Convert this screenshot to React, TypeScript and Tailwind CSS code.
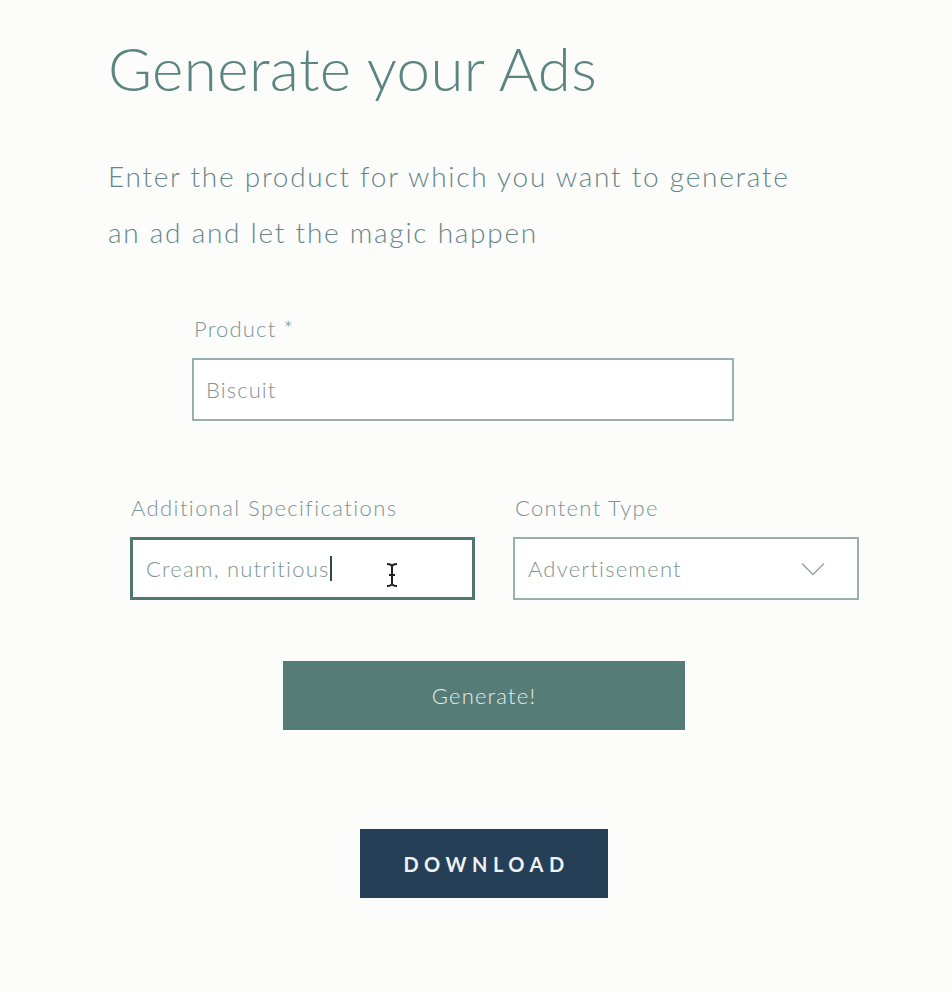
const font = { fontFamily: 'Lato, "Open Sans", sans-serif' }

export default function App() {
  return (
    <div className="min-h-[992px] w-[952px] bg-[#fcfcfb] text-[#5b817c]" style={font}>
      <div className="pl-[108px] pt-[24px]">
        <h1 className="text-[60px] font-light leading-[88px] tracking-[0.4px] text-[#5a8580]">Generate your Ads</h1>
        <p className="mt-[36px] w-[700px] text-[28px] font-light leading-[56px] tracking-[1.75px] text-[#66878a]">
          Enter the product for which you want to generate an ad and let the magic happen
        </p>
      </div>

      <div className="mt-[52px] pl-[192px]">
        <label className="block pl-[2px] text-[22px] font-light tracking-[1.2px] text-[#7a9592]">Product *</label>
        <div className="mt-[13px] flex h-[63px] w-[542px] items-center border-2 border-[#98b0ad] bg-white px-[12px] text-[22px] font-light tracking-[1.1px] text-[#7d9693]">
          Biscuit
        </div>
      </div>

      <div className="mt-[70px] flex gap-[38px] pl-[130px]">
        <div>
          <label className="block pl-[1px] text-[22px] font-light tracking-[1.4px] text-[#7a9592]">Additional Specifications</label>
          <div className="relative mt-[13px] flex h-[63px] w-[345px] items-center border-[3px] border-[#4f7871] bg-white px-[13px] text-[22px] font-light tracking-[1.2px] text-[#7d9693]">
            <span>Cream, nutritious</span>
            <span className="h-[25px] w-[2px] bg-[#2f4a46]" />
            <svg className="absolute left-[252px] top-[22px]" width="14" height="26" viewBox="0 0 14 26" fill="none" stroke="#222" strokeWidth="2">
              <path d="M2 2c3 0 5 1 5 3v16c0 2-2 3-5 3M12 2c-3 0-5 1-5 3v16c0 2 2 3 5 3M4 13h6" />
            </svg>
          </div>
        </div>
        <div>
          <label className="block pl-[2px] text-[22px] font-light tracking-[1.3px] text-[#7a9592]">Content Type</label>
          <div className="mt-[13px] flex h-[63px] w-[346px] items-center justify-between border-2 border-[#98b0ad] bg-white pl-[13px] pr-[32px] text-[22px] font-light tracking-[1.2px] text-[#7d9693]">
            <span>Advertisement</span>
            <svg width="24" height="14" viewBox="0 0 24 14" fill="none" stroke="#8aa3a0" strokeWidth="1.3">
              <path d="M1 1.5l11 11 11-11" />
            </svg>
          </div>
        </div>
      </div>

      <div className="mt-[61px] pl-[283px]">
        <button type="button" className="flex h-[69px] w-[402px] items-center justify-center bg-[#557c77] text-[22px] font-light tracking-[1.2px] text-[#e4ecea]">
          Generate!
        </button>
      </div>

      <div className="mt-[99px] pl-[360px]">
        <button type="button" className="flex h-[69px] w-[248px] items-center justify-center bg-[#243f56] pl-[5px] text-[20px] font-bold tracking-[5.5px] text-[#eef2f4]">
          DOWNLOAD
        </button>
      </div>
    </div>
  )
}
